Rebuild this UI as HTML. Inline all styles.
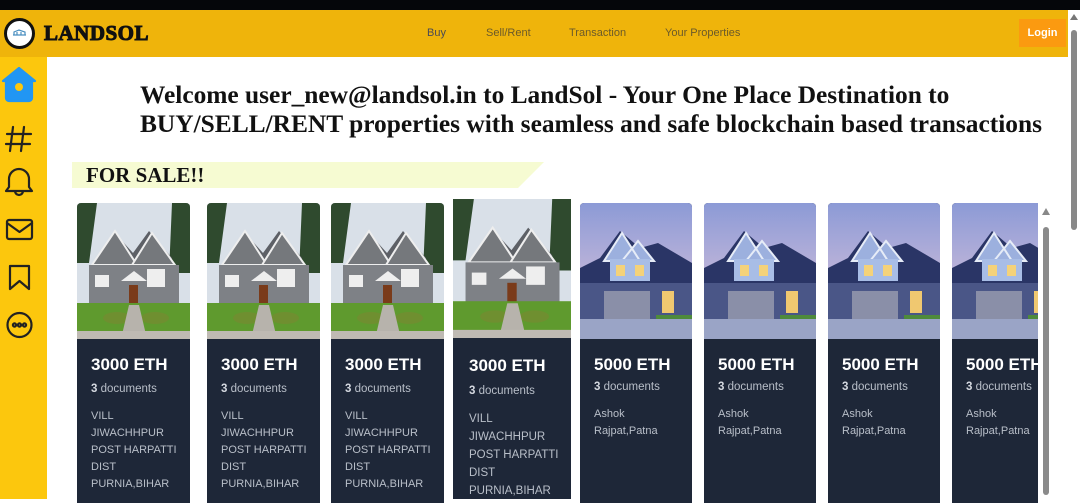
<!DOCTYPE html>
<html><head><meta charset="utf-8"><style>
*{margin:0;padding:0;box-sizing:border-box}
body{width:1080px;height:499px;overflow:hidden;background:#fff;position:relative;font-family:"Liberation Sans",sans-serif}
.top{position:absolute;left:0;top:0;width:1080px;height:10px;background:#05060a}
.hdr{position:absolute;left:0;top:10px;width:1068px;height:47px;background:#efb40b}
.logo{position:absolute;left:4px;top:8px;width:31px;height:31px;border-radius:50%;border:3px solid #111;background:#fff}
.brand{position:absolute;left:44px;top:11px;font-family:"Liberation Serif",serif;font-weight:bold;font-size:21px;color:#111;letter-spacing:.5px;-webkit-text-stroke:1px #111}
.nav{position:absolute;top:17px;font-size:11px;color:#6b5a2a}
.login{position:absolute;left:1019px;top:9px;width:47px;height:28px;background:#fb9a10;color:#fff;font-size:11px;font-weight:bold;text-align:center;line-height:28px}
.side{position:absolute;left:0;top:57px;width:47px;height:442px;background:#fcc70d}
.wsb{position:absolute;left:1068px;top:10px;width:12px;height:489px;background:#fff}
.h1{position:absolute;left:140px;top:81px;font-family:"Liberation Serif",serif;font-weight:bold;font-size:25.4px;line-height:29px;color:#111;white-space:nowrap}
.sale{position:absolute;left:72px;top:162px;width:472px;height:26px;background:#f6fbd2;clip-path:polygon(0 0,100% 0,94.5% 100%,0 100%)}
.sale span{position:absolute;left:14px;top:1px;font-family:"Liberation Serif",serif;font-weight:bold;font-size:21px;color:#111}
.card{position:absolute;top:203px;width:113px;height:300px;background:#1e2738;border-radius:4px 4px 0 0;overflow:hidden}
.card svg{display:block}
.p{position:absolute;left:14px;top:152px;font-size:17px;font-weight:bold;color:#fff;white-space:nowrap}
.d{position:absolute;left:14px;top:180px;font-size:11.5px;color:#b9bfc9;white-space:nowrap}
.d b{color:#d5d9e0}
.a{position:absolute;left:14px;top:205px;font-size:11px;line-height:17px;color:#b9bfc9;white-space:nowrap}
.isb{position:absolute;left:1038px;top:205px;width:16px;height:294px;background:#fff}
</style></head><body>
<div class="top"></div>
<div class="hdr">
<div class="logo"><svg width="25" height="25" viewBox="0 0 25 25"><path d="M6 14h13M7 14v-3l5-2 6 2v3M10 11v3M14 11v3" stroke="#4a8fc0" stroke-width="1.2" fill="none"/></svg></div>
<div class="brand">LANDSOL</div>
<div class="nav" style="left:427px;color:#4a4a55">Buy</div>
<div class="nav" style="left:486px">Sell/Rent</div>
<div class="nav" style="left:569px">Transaction</div>
<div class="nav" style="left:665px">Your Properties</div>
<div class="login">Login</div>
</div>
<div class="side">
<svg width="47" height="442" viewBox="0 0 47 442" fill="none" stroke="#222" stroke-width="2.2" stroke-linecap="round" stroke-linejoin="round">
<path d="M3 24 L19 11 L35 24 Z" fill="#2196f3" stroke="#2196f3"/><rect x="6" y="22" width="26" height="22" rx="3" fill="#2196f3" stroke="#2196f3"/><circle cx="19" cy="30" r="4" fill="#fcc70d" stroke="none"/>
<path d="M13 70 L10 94 M24 70 L21 94 M7 77 H31 M6 87 H30"/>
<path d="M9 130 V122 a10 10 0 0 1 20 0 V130 L32 134 H6 Z M15 134 a4 4 0 0 0 8 0"/>
<rect x="7" y="163" width="25" height="19" rx="2"/><path d="M7 166 L19.5 175 L32 166"/>
<path d="M10 209 H29 V232 L19.5 224 L10 232 Z"/>
<circle cx="19.5" cy="268" r="12"/><circle cx="14.5" cy="268" r="1.6"/><circle cx="19.5" cy="268" r="1.6"/><circle cx="24.5" cy="268" r="1.6"/>
</svg></div>
<div class="wsb"><svg width="12" height="489"><path d="M2 10 L6 4 L10 10Z" fill="#777"/><rect x="3" y="20" width="6" height="200" rx="3" fill="#888"/></svg></div>
<div class="h1">Welcome user_new@landsol.in to LandSol - Your One Place Destination to<br>BUY/SELL/RENT properties with seamless and safe blockchain based transactions</div>
<div class="sale"><span>FOR SALE!!</span></div>

<div class="card" style="left:77px"><svg width="113" height="136" viewBox="0 0 113 136" preserveAspectRatio="none"><rect width="113" height="136" fill="#d9e0e8"/><path d="M0 0h20l-8 60H0z M95 0h18v70H92z" fill="#2f4a2e"/><path d="M20 60 L38 30 L56 50 L72 28 L95 55 V110 H20Z" fill="#5d6066"/><path d="M15 62 L38 28 L60 62Z" fill="#75787c" stroke="#eee" stroke-width="2"/><path d="M55 62 L75 30 L98 62Z" fill="#75787c" stroke="#eee" stroke-width="2"/><rect x="12" y="62" width="90" height="45" fill="#7e8186"/><rect x="18" y="72" width="14" height="12" fill="#eee"/><rect x="70" y="66" width="18" height="18" fill="#eee"/><path d="M44 78 L57 68 L70 78Z" fill="#eee"/><rect x="52" y="82" width="9" height="20" fill="#7a3b1a"/><rect x="0" y="100" width="113" height="36" fill="#5f9a2e"/><ellipse cx="40" cy="115" rx="14" ry="6" fill="#6f8f30"/><ellipse cx="78" cy="115" rx="14" ry="6" fill="#6f8f30"/><path d="M52 102 H62 L70 136 H44Z" fill="#b7b3ac"/><path d="M0 128 H113 V136 H0Z" fill="#bfbab3"/></svg><div class="p">3000 ETH</div><div class="d"><b>3</b> documents</div><div class="a">VILL<br>JIWACHHPUR<br>POST HARPATTI<br>DIST<br>PURNIA,BIHAR</div></div>
<div class="card" style="left:207px"><svg width="113" height="136" viewBox="0 0 113 136" preserveAspectRatio="none"><rect width="113" height="136" fill="#d9e0e8"/><path d="M0 0h20l-8 60H0z M95 0h18v70H92z" fill="#2f4a2e"/><path d="M20 60 L38 30 L56 50 L72 28 L95 55 V110 H20Z" fill="#5d6066"/><path d="M15 62 L38 28 L60 62Z" fill="#75787c" stroke="#eee" stroke-width="2"/><path d="M55 62 L75 30 L98 62Z" fill="#75787c" stroke="#eee" stroke-width="2"/><rect x="12" y="62" width="90" height="45" fill="#7e8186"/><rect x="18" y="72" width="14" height="12" fill="#eee"/><rect x="70" y="66" width="18" height="18" fill="#eee"/><path d="M44 78 L57 68 L70 78Z" fill="#eee"/><rect x="52" y="82" width="9" height="20" fill="#7a3b1a"/><rect x="0" y="100" width="113" height="36" fill="#5f9a2e"/><ellipse cx="40" cy="115" rx="14" ry="6" fill="#6f8f30"/><ellipse cx="78" cy="115" rx="14" ry="6" fill="#6f8f30"/><path d="M52 102 H62 L70 136 H44Z" fill="#b7b3ac"/><path d="M0 128 H113 V136 H0Z" fill="#bfbab3"/></svg><div class="p">3000 ETH</div><div class="d"><b>3</b> documents</div><div class="a">VILL<br>JIWACHHPUR<br>POST HARPATTI<br>DIST<br>PURNIA,BIHAR</div></div>
<div class="card" style="left:331px"><svg width="113" height="136" viewBox="0 0 113 136" preserveAspectRatio="none"><rect width="113" height="136" fill="#d9e0e8"/><path d="M0 0h20l-8 60H0z M95 0h18v70H92z" fill="#2f4a2e"/><path d="M20 60 L38 30 L56 50 L72 28 L95 55 V110 H20Z" fill="#5d6066"/><path d="M15 62 L38 28 L60 62Z" fill="#75787c" stroke="#eee" stroke-width="2"/><path d="M55 62 L75 30 L98 62Z" fill="#75787c" stroke="#eee" stroke-width="2"/><rect x="12" y="62" width="90" height="45" fill="#7e8186"/><rect x="18" y="72" width="14" height="12" fill="#eee"/><rect x="70" y="66" width="18" height="18" fill="#eee"/><path d="M44 78 L57 68 L70 78Z" fill="#eee"/><rect x="52" y="82" width="9" height="20" fill="#7a3b1a"/><rect x="0" y="100" width="113" height="36" fill="#5f9a2e"/><ellipse cx="40" cy="115" rx="14" ry="6" fill="#6f8f30"/><ellipse cx="78" cy="115" rx="14" ry="6" fill="#6f8f30"/><path d="M52 102 H62 L70 136 H44Z" fill="#b7b3ac"/><path d="M0 128 H113 V136 H0Z" fill="#bfbab3"/></svg><div class="p">3000 ETH</div><div class="d"><b>3</b> documents</div><div class="a">VILL<br>JIWACHHPUR<br>POST HARPATTI<br>DIST<br>PURNIA,BIHAR</div></div>
<div class="card" style="left:453px;top:199px;width:118px;border-radius:0"><svg width="118" height="139" viewBox="0 0 113 136" preserveAspectRatio="none"><rect width="113" height="136" fill="#d9e0e8"/><path d="M0 0h20l-8 60H0z M95 0h18v70H92z" fill="#2f4a2e"/><path d="M20 60 L38 30 L56 50 L72 28 L95 55 V110 H20Z" fill="#5d6066"/><path d="M15 62 L38 28 L60 62Z" fill="#75787c" stroke="#eee" stroke-width="2"/><path d="M55 62 L75 30 L98 62Z" fill="#75787c" stroke="#eee" stroke-width="2"/><rect x="12" y="62" width="90" height="45" fill="#7e8186"/><rect x="18" y="72" width="14" height="12" fill="#eee"/><rect x="70" y="66" width="18" height="18" fill="#eee"/><path d="M44 78 L57 68 L70 78Z" fill="#eee"/><rect x="52" y="82" width="9" height="20" fill="#7a3b1a"/><rect x="0" y="100" width="113" height="36" fill="#5f9a2e"/><ellipse cx="40" cy="115" rx="14" ry="6" fill="#6f8f30"/><ellipse cx="78" cy="115" rx="14" ry="6" fill="#6f8f30"/><path d="M52 102 H62 L70 136 H44Z" fill="#b7b3ac"/><path d="M0 128 H113 V136 H0Z" fill="#bfbab3"/></svg><div class="p" style="top:157px;left:16px">3000 ETH</div><div class="d" style="top:186px;left:16px"><b>3</b> documents</div><div class="a" style="top:211px;left:16px;line-height:18px;font-size:11.5px">VILL<br>JIWACHHPUR<br>POST HARPATTI<br>DIST<br>PURNIA,BIHAR</div></div>

<div class="card" style="left:580px;width:112px"><svg width="112" height="136" viewBox="0 0 112 136" preserveAspectRatio="none"><defs><linearGradient id="sk" x1="0" y1="0" x2="0" y2="1"><stop offset="0" stop-color="#8c9ad6"/><stop offset="1" stop-color="#e9cbdc"/></linearGradient></defs><rect width="112" height="136" fill="url(#sk)"/><path d="M0 65 L20 55 L40 28 L60 45 L78 40 L112 60 V112 H0Z" fill="#2a3566"/><path d="M24 58 L42 30 L60 58Z M42 58 L58 38 L74 58Z" fill="#9cb0de" stroke="#e6ecf7" stroke-width="2"/><rect x="30" y="56" width="40" height="22" fill="#a8bde6"/><rect x="36" y="62" width="9" height="11" fill="#f4d27a"/><rect x="55" y="62" width="9" height="11" fill="#f4d27a"/><rect x="0" y="80" width="112" height="40" fill="#4a5687"/><rect x="24" y="88" width="46" height="28" fill="#8a8fa8"/><rect x="82" y="88" width="12" height="22" fill="#f0c870"/><rect x="0" y="116" width="112" height="20" fill="#9aa4c6"/><rect x="76" y="112" width="36" height="4" fill="#4e8a3c"/></svg><div class="p">5000 ETH</div><div class="d" style="top:178px"><b>3</b> documents</div><div class="a" style="top:203px">Ashok<br>Rajpat,Patna</div></div>
<div class="card" style="left:704px;width:112px"><svg width="112" height="136" viewBox="0 0 112 136" preserveAspectRatio="none"><rect width="112" height="136" fill="url(#sk)"/><path d="M0 65 L20 55 L40 28 L60 45 L78 40 L112 60 V112 H0Z" fill="#2a3566"/><path d="M24 58 L42 30 L60 58Z M42 58 L58 38 L74 58Z" fill="#9cb0de" stroke="#e6ecf7" stroke-width="2"/><rect x="30" y="56" width="40" height="22" fill="#a8bde6"/><rect x="36" y="62" width="9" height="11" fill="#f4d27a"/><rect x="55" y="62" width="9" height="11" fill="#f4d27a"/><rect x="0" y="80" width="112" height="40" fill="#4a5687"/><rect x="24" y="88" width="46" height="28" fill="#8a8fa8"/><rect x="82" y="88" width="12" height="22" fill="#f0c870"/><rect x="0" y="116" width="112" height="20" fill="#9aa4c6"/><rect x="76" y="112" width="36" height="4" fill="#4e8a3c"/></svg><div class="p">5000 ETH</div><div class="d" style="top:178px"><b>3</b> documents</div><div class="a" style="top:203px">Ashok<br>Rajpat,Patna</div></div>
<div class="card" style="left:828px;width:112px"><svg width="112" height="136" viewBox="0 0 112 136" preserveAspectRatio="none"><rect width="112" height="136" fill="url(#sk)"/><path d="M0 65 L20 55 L40 28 L60 45 L78 40 L112 60 V112 H0Z" fill="#2a3566"/><path d="M24 58 L42 30 L60 58Z M42 58 L58 38 L74 58Z" fill="#9cb0de" stroke="#e6ecf7" stroke-width="2"/><rect x="30" y="56" width="40" height="22" fill="#a8bde6"/><rect x="36" y="62" width="9" height="11" fill="#f4d27a"/><rect x="55" y="62" width="9" height="11" fill="#f4d27a"/><rect x="0" y="80" width="112" height="40" fill="#4a5687"/><rect x="24" y="88" width="46" height="28" fill="#8a8fa8"/><rect x="82" y="88" width="12" height="22" fill="#f0c870"/><rect x="0" y="116" width="112" height="20" fill="#9aa4c6"/><rect x="76" y="112" width="36" height="4" fill="#4e8a3c"/></svg><div class="p">5000 ETH</div><div class="d" style="top:178px"><b>3</b> documents</div><div class="a" style="top:203px">Ashok<br>Rajpat,Patna</div></div>
<div class="card" style="left:952px;width:86px;border-radius:4px 0 0 0"><svg width="112" height="136" viewBox="0 0 112 136" preserveAspectRatio="none"><rect width="112" height="136" fill="url(#sk)"/><path d="M0 65 L20 55 L40 28 L60 45 L78 40 L112 60 V112 H0Z" fill="#2a3566"/><path d="M24 58 L42 30 L60 58Z M42 58 L58 38 L74 58Z" fill="#9cb0de" stroke="#e6ecf7" stroke-width="2"/><rect x="30" y="56" width="40" height="22" fill="#a8bde6"/><rect x="36" y="62" width="9" height="11" fill="#f4d27a"/><rect x="55" y="62" width="9" height="11" fill="#f4d27a"/><rect x="0" y="80" width="112" height="40" fill="#4a5687"/><rect x="24" y="88" width="46" height="28" fill="#8a8fa8"/><rect x="82" y="88" width="12" height="22" fill="#f0c870"/><rect x="0" y="116" width="112" height="20" fill="#9aa4c6"/><rect x="76" y="112" width="36" height="4" fill="#4e8a3c"/></svg><div class="p">5000 ETH</div><div class="d" style="top:178px"><b>3</b> documents</div><div class="a" style="top:203px">Ashok<br>Rajpat,Patna</div></div>
<div class="isb"><svg width="16" height="294"><path d="M4 10 L8 3 L12 10Z" fill="#888"/><rect x="5" y="22" width="6" height="268" rx="3" fill="#8a8a8a"/></svg></div>
</body></html>
